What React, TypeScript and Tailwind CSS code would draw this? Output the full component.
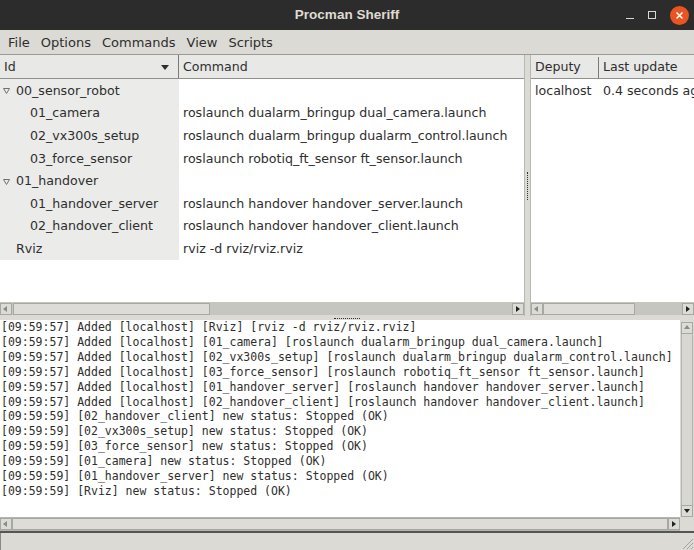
import React from 'react';

type Row = { id: string; cmd: string; level: 0 | 1; group?: boolean };

const rows: Row[] = [
  { id: '00_sensor_robot', cmd: '', level: 0, group: true },
  { id: '01_camera', cmd: 'roslaunch dualarm_bringup dual_camera.launch', level: 1 },
  { id: '02_vx300s_setup', cmd: 'roslaunch dualarm_bringup dualarm_control.launch', level: 1 },
  { id: '03_force_sensor', cmd: 'roslaunch robotiq_ft_sensor ft_sensor.launch', level: 1 },
  { id: '01_handover', cmd: '', level: 0, group: true },
  { id: '01_handover_server', cmd: 'roslaunch handover handover_server.launch', level: 1 },
  { id: '02_handover_client', cmd: 'roslaunch handover handover_client.launch', level: 1 },
  { id: 'Rviz', cmd: 'rviz -d rviz/rviz.rviz', level: 0 },
];

const logLines = [
  '[09:59:57] Added [localhost] [Rviz] [rviz -d rviz/rviz.rviz]',
  '[09:59:57] Added [localhost] [01_camera] [roslaunch dualarm_bringup dual_camera.launch]',
  '[09:59:57] Added [localhost] [02_vx300s_setup] [roslaunch dualarm_bringup dualarm_control.launch]',
  '[09:59:57] Added [localhost] [03_force_sensor] [roslaunch robotiq_ft_sensor ft_sensor.launch]',
  '[09:59:57] Added [localhost] [01_handover_server] [roslaunch handover handover_server.launch]',
  '[09:59:57] Added [localhost] [02_handover_client] [roslaunch handover handover_client.launch]',
  '[09:59:59] [02_handover_client] new status: Stopped (OK)',
  '[09:59:59] [02_vx300s_setup] new status: Stopped (OK)',
  '[09:59:59] [03_force_sensor] new status: Stopped (OK)',
  '[09:59:59] [01_camera] new status: Stopped (OK)',
  '[09:59:59] [01_handover_server] new status: Stopped (OK)',
  '[09:59:59] [Rviz] new status: Stopped (OK)',
];

const Tri = ({ dir }: { dir: 'left' | 'right' | 'up' | 'down' }) => {
  const pts = {
    left: '5,1 5,7 1,4',
    right: '2,1 2,7 6,4',
    up: '1,5 7,5 4,1',
    down: '1,2 7,2 4,6',
  }[dir];
  return (
    <svg width="8" height="8" viewBox="0 0 8 8">
      <polygon points={pts} fill={dir === 'left' || dir === 'up' ? '#8a8a86' : '#222'} />
    </svg>
  );
};

const ArrowBtn = ({ dir }: { dir: 'left' | 'right' | 'up' | 'down' }) => (
  <div className="flex h-[12px] w-[12px] shrink-0 items-center justify-center border border-[#a8a8a3] bg-[#dcdcd7]">
    <Tri dir={dir} />
  </div>
);

const Grip = () => (
  <svg width="14" height="14" viewBox="0 0 14 14">
    <line x1="13" y1="3" x2="3" y2="13" stroke="#a5a5a0" />
    <line x1="13" y1="7" x2="7" y2="13" stroke="#a5a5a0" />
    <line x1="13" y1="11" x2="11" y2="13" stroke="#a5a5a0" />
  </svg>
);

const sans = "font-['DejaVu_Sans',sans-serif]";

export default function App() {
  return (
    <div className={`flex h-[550px] w-[694px] flex-col overflow-hidden bg-[#dcdad5] text-[12.6px] text-[#2e2e2e] ${sans}`}>
      {/* title bar */}
      <div className="relative flex h-[30px] shrink-0 items-center justify-center bg-[#2c2c2c]">
        <span className="font-['Liberation_Sans',sans-serif] text-[13.5px] font-bold text-[#dfdbd2]">Procman Sheriff</span>
        <div className="absolute right-[5px] top-0 flex h-[30px] items-center gap-[14px]">
          <span className="mt-[6px] block h-[1px] w-[8px] bg-[#d6d6d6]" />
          <span className="block h-[8px] w-[8px] border border-[#d6d6d6]" />
          <span className="flex h-[19px] w-[19px] items-center justify-center rounded-full bg-[#e95420]">
            <svg width="9" height="9" viewBox="0 0 9 9">
              <path d="M1.5 1.5 L7.5 7.5 M7.5 1.5 L1.5 7.5" stroke="#fff" strokeWidth="1.5" />
            </svg>
          </span>
        </div>
      </div>

      {/* menu bar */}
      <div className="flex h-[25px] shrink-0 items-center gap-[11px] border-b border-[#9a9a96] pl-[8px] pt-[2px] text-[13px]">
        <span>File</span>
        <span>Options</span>
        <span>Commands</span>
        <span>View</span>
        <span>Scripts</span>
      </div>

      {/* upper panes */}
      <div className="flex h-[261px] shrink-0">
        {/* left pane */}
        <div className="flex w-[525px] shrink-0 flex-col border-r border-[#b8b8b3] bg-white">
          <div className="flex h-[24px] shrink-0 border-b border-[#8f8f8b] bg-[#e8e8e6]">
            <div className="flex w-[179px] items-center justify-between border-r border-[#7a7a76] pl-[4px] pr-[9px] pt-[2px]">
              <span>Id</span>
              <svg width="8" height="6" viewBox="0 0 8 6">
                <polygon points="0,0 8,0 4,5" fill="#2e2e2e" />
              </svg>
            </div>
            <div className="flex items-center pl-[4px] pt-[2px]">Command</div>
          </div>
          <div className="flex-1">
            {rows.map((r) => (
              <div key={r.id} className="flex h-[22.6px] items-center">
                <div className="flex h-full w-[179px] items-center bg-[#ebebea] pt-[2px]">
                  {r.group ? (
                    <svg className="ml-[3px] mr-[6px]" width="7" height="6" viewBox="0 0 7 6">
                      <polygon points="0.5,0.5 6.5,0.5 3.5,5.5" fill="none" stroke="#707070" />
                    </svg>
                  ) : (
                    <span className={r.level === 1 ? 'w-[30px]' : 'w-[16px]'} />
                  )}
                  <span>{r.id}</span>
                </div>
                <div className="pl-[4px] pt-[2px]">{r.cmd}</div>
              </div>
            ))}
          </div>
          <div className="flex h-[13px] shrink-0 items-center bg-[#c6c6c1]">
            <ArrowBtn dir="left" />
            <div className="ml-[1px] h-[12px] w-[197px] border border-[#a8a8a3] bg-[#dddcd7]" />
            <div className="flex-1" />
            <ArrowBtn dir="right" />
          </div>
          <div className="h-[1px] shrink-0 bg-[#dcdad5]" />
        </div>

        {/* vertical splitter */}
        <div className="flex w-[5px] shrink-0 items-center justify-center bg-[#dcdad5]">
          <div className="h-[28px] w-[1px] border-l border-dotted border-[#333]" />
        </div>

        {/* right pane */}
        <div className="flex flex-1 flex-col overflow-hidden border-l border-[#b8b8b3] bg-white">
          <div className="flex h-[24px] shrink-0 border-b border-[#8f8f8b] bg-[#e8e8e6] pt-[2px]">
            <div className="flex w-[68px] shrink-0 items-center border-r border-[#7a7a76] pl-[4px]">Deputy</div>
            <div className="flex shrink-0 items-center whitespace-nowrap pl-[4px]">Last update</div>
          </div>
          <div className="flex-1">
            <div className="flex h-[22.6px] items-center whitespace-nowrap pt-[2px]">
              <span className="w-[68px] shrink-0 pl-[4px]">localhost</span>
              <span className="shrink-0 pl-[4px]">0.4 seconds ago</span>
            </div>
          </div>
          <div className="flex h-[13px] shrink-0 items-center bg-[#c6c6c1]">
            <ArrowBtn dir="left" />
            <div className="h-[12px] w-[92px] border border-[#a8a8a3] bg-[#dddcd7]" />
            <div className="flex-1" />
            <ArrowBtn dir="right" />
          </div>
          <div className="h-[1px] shrink-0 bg-[#dcdad5]" />
        </div>
      </div>

      {/* horizontal splitter */}
      <div className="flex h-[4px] shrink-0 items-center justify-center">
        <div className="h-[1px] w-[26px] border-t border-dotted border-[#333]" />
      </div>

      {/* log */}
      <div className="flex h-[197px] shrink-0">
        <div className="flex-1 overflow-hidden bg-white pl-[1px] font-['DejaVu_Sans_Mono',monospace] text-[11.5px] leading-[14.9px] text-[#2e2e2e]">
          {logLines.map((l, i) => (
            <div key={i} className="whitespace-pre">{l}</div>
          ))}
        </div>
        <div className="flex w-[14px] shrink-0 flex-col items-center bg-[#dcdad5] pt-[2px]">
          <ArrowBtn dir="up" />
          <div className="w-[12px] flex-1 border-x border-[#b5b5b0] bg-[#d8d7d2]" />
          <ArrowBtn dir="down" />
        </div>
      </div>

      {/* log h scroll */}
      <div className="flex h-[14px] w-[680px] shrink-0 items-center border-y border-[#b5b5b0] bg-[#c6c6c1]">
        <ArrowBtn dir="left" />
        <div className="h-[12px] flex-1 border border-[#a8a8a3] bg-[#dddcd7]" />
        <ArrowBtn dir="right" />
      </div>

      {/* status bar */}
      <div className="flex flex-1 items-end justify-end border-t-2 border-[#555]">
        <div className="flex-1 self-stretch border-l border-[#888]" />
        <Grip />
      </div>
    </div>
  );
}
